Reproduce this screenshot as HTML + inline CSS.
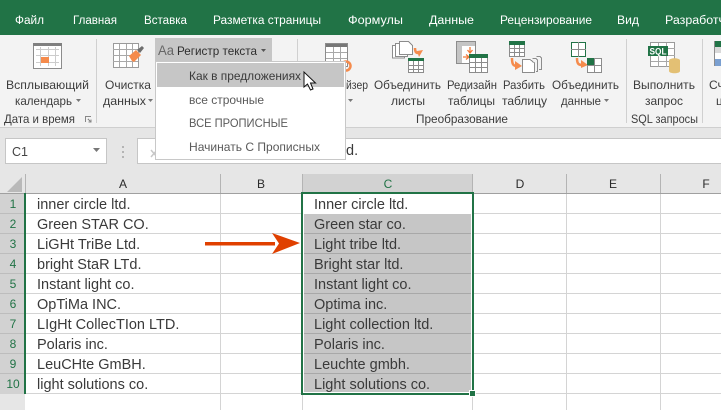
<!DOCTYPE html>
<html><head><meta charset="utf-8"><style>
html,body{margin:0;padding:0;width:721px;height:410px;overflow:hidden;background:#fff}
svg{display:block}
text{font-family:"Liberation Sans",sans-serif}
.t{font-size:11.5px;fill:#fff}
.r{font-size:12px;fill:#3c3c3c}
.m{font-size:12px;fill:#5a5a5a}
.c{font-size:14.5px;fill:#3a3a3a}
.h{font-size:12px;fill:#2a2a2a;text-anchor:middle}
.n{font-size:12px;fill:#217346;text-anchor:middle}
.g{stroke:#8c8c8c;fill:#fff;stroke-width:1;shape-rendering:crispEdges}
.l{stroke:#8c8c8c;fill:none;stroke-width:1;shape-rendering:crispEdges}
</style></head><body>
<svg width="721" height="410" viewBox="0 0 721 410" xmlns="http://www.w3.org/2000/svg">
<!-- tabs -->
<rect width="721" height="35" fill="#217346"/>
<text class="t" x="15" y="24" textLength="29" lengthAdjust="spacingAndGlyphs">Файл</text>
<text class="t" x="73" y="24" textLength="44" lengthAdjust="spacingAndGlyphs">Главная</text>
<text class="t" x="144" y="24" textLength="43" lengthAdjust="spacingAndGlyphs">Вставка</text>
<text class="t" x="213" y="24" textLength="108" lengthAdjust="spacingAndGlyphs">Разметка страницы</text>
<text class="t" x="348" y="24" textLength="55" lengthAdjust="spacingAndGlyphs">Формулы</text>
<text class="t" x="429" y="24" textLength="45" lengthAdjust="spacingAndGlyphs">Данные</text>
<text class="t" x="500" y="24" textLength="92" lengthAdjust="spacingAndGlyphs">Рецензирование</text>
<text class="t" x="617" y="24" textLength="22" lengthAdjust="spacingAndGlyphs">Вид</text>
<text class="t" x="665" y="24" textLength="60" lengthAdjust="spacingAndGlyphs">Разработч</text>

<!-- ribbon -->
<rect y="35" width="721" height="92" fill="#f3f3f3"/>
<rect y="127" width="721" height="1" fill="#cfcfcf"/>
<g fill="#d0d0d0">
<rect x="96" y="39" width="1" height="84"/><rect x="297" y="39" width="1" height="84"/>
<rect x="626" y="39" width="1" height="84"/><rect x="702" y="39" width="1" height="84"/>
</g>

<!-- calendar icon -->
<rect class="g" x="33.500" y="43.500" width="28" height="25"/>
<rect x="33" y="43" width="29" height="3" fill="#808080"/>
<path class="l" style="stroke:#cccccc" d="M36 49.500H59M36 55.500H59M36 62.500H59M40.500 47V66M48.500 47V66M55.500 47V66"/>
<rect x="41" y="57" width="8" height="6" fill="#f58b4c"/>

<!-- clear data icon -->
<rect x="113.500" y="43.500" width="25" height="24" fill="#fff" stroke="#9a9a9a" shape-rendering="crispEdges"/>
<path class="l" style="stroke:#a8a8a8" d="M113 49.500H138M113 55.500H138M113 61.500H138M119.500 44V67M126.500 44V67M132.500 44V67"/>
<path d="M129 56l7-6 5 5-7 7-2-1z" fill="#f58b4c"/>
<path d="M137 50l5-4 2 2-4 5z" fill="#6e6e6e"/>
<text class="r" x="6" y="89" textLength="83" lengthAdjust="spacingAndGlyphs">Всплывающий</text>
<text class="r" x="15" y="105" textLength="57" lengthAdjust="spacingAndGlyphs">календарь</text>
<path d="M76 99h5l-2.500 3z" fill="#777"/>
<text class="r" x="4" y="123" textLength="71" lengthAdjust="spacingAndGlyphs">Дата и время</text>
<path class="l" style="stroke:#888" d="M85.500 122V116.500H91M88 119l3 3M91 119.500V122H88.500"/>
<text class="r" x="105" y="89" textLength="46" lengthAdjust="spacingAndGlyphs">Очистка</text>
<text class="r" x="103" y="105" textLength="43" lengthAdjust="spacingAndGlyphs">данных</text>
<path d="M148 99h5l-2.500 3z" fill="#777"/>

<!-- Регистр текста button -->
<rect x="155" y="38" width="117" height="24" fill="#c6c6c6"/>
<text x="158" y="55" font-size="14" fill="#666" textLength="16" lengthAdjust="spacingAndGlyphs">Aa</text>
<text class="r" x="177" y="55" style="fill:#2e2e2e" textLength="80" lengthAdjust="spacingAndGlyphs">Регистр текста</text>
<path d="M261 49h5l-2.500 3z" fill="#555"/>

<!-- slicer icon -->
<rect x="325.500" y="43.500" width="22" height="23" fill="#fff" stroke="#8c8c8c" shape-rendering="crispEdges"/>
<rect x="326" y="44" width="21" height="3" fill="#777"/>
<path class="l" style="stroke:#a8a8a8" d="M326 52.500H347M326 58.500H347M333.500 47V67M340.500 47V67"/>
<circle cx="346" cy="66" r="4.500" fill="none" stroke="#f58b4c" stroke-width="2.500"/>
<text class="r" x="346" y="89" textLength="22" lengthAdjust="spacingAndGlyphs">йзер</text>
<path d="M348 99h5l-2.500 3z" fill="#777"/>

<!-- merge sheets icon -->
<rect class="g" x="392.500" y="45.500" width="12" height="12.500"/>
<rect class="g" x="395.500" y="43.500" width="12" height="13"/>
<path class="g" d="M399.500 41.500H408.500L412.500 45.500V54.500H399.500Z"/>
<path d="M415 48c0 3 1 5 3 5" fill="none" stroke="#f58b4c" stroke-width="2.500"/>
<path d="M417 51l6-1-4 7z" fill="#f58b4c"/>
<rect x="408.500" y="58.500" width="15" height="14" fill="#fff" stroke="#8c8c8c" shape-rendering="crispEdges"/>
<rect x="408" y="58" width="16" height="3" fill="#217346"/>
<path class="l" d="M408 65.500H424M408 69.500H424M413.500 61V73M418.500 61V73"/>
<text class="r" x="374" y="89" textLength="67" lengthAdjust="spacingAndGlyphs">Объединить</text>
<text class="r" x="391" y="105" textLength="34" lengthAdjust="spacingAndGlyphs">листы</text>

<!-- redesign icon -->
<rect x="456.500" y="41.500" width="19" height="22" fill="#fff" stroke="#8c8c8c" shape-rendering="crispEdges"/>
<rect x="457" y="42" width="18" height="4" fill="#c4c4c4"/>
<rect x="457" y="46" width="5" height="17" fill="#c4c4c4"/>
<path d="M470 47v5M467.500 50l2.500 3 2.500-3M463 57h5M466 54.500l3 2.500-3 2.500" fill="none" stroke="#f27b3a" stroke-width="1.300"/>
<rect x="469.500" y="54.500" width="18" height="18" fill="#fff" stroke="#8c8c8c" shape-rendering="crispEdges"/>
<rect x="469" y="54" width="19" height="4" fill="#217346"/>
<path class="l" d="M469 62.500H488M469 67.500H488M475.500 58V73M481.500 58V73"/>
<text class="r" x="447" y="89" textLength="50" lengthAdjust="spacingAndGlyphs">Редизайн</text>
<text class="r" x="448" y="105" textLength="47" lengthAdjust="spacingAndGlyphs">таблицы</text>

<!-- split icon -->
<rect x="509.500" y="41.500" width="15" height="15" fill="#fff" stroke="#8c8c8c" shape-rendering="crispEdges"/>
<rect x="509" y="41" width="16" height="4" fill="#217346"/>
<path class="l" d="M509 48.500H525M509 52.500H525M514.500 45V57M519.500 45V57"/>
<path d="M512 58c0 6 1 8 5 8" fill="none" stroke="#f58b4c" stroke-width="2.500"/>
<path d="M515 61l7 5-7 4z" fill="#f58b4c"/>
<path class="l" d="M536.500 56.500H540L541.500 58V69.500H539M532.500 58.500H536L537.500 60V71.500H536"/>
<path class="g" d="M522.500 59.500H530L534.500 63V72.500H522.500Z"/>
<text class="r" x="503" y="89" textLength="42" lengthAdjust="spacingAndGlyphs">Разбить</text>
<text class="r" x="502" y="105" textLength="45" lengthAdjust="spacingAndGlyphs">таблицу</text>

<!-- merge data icon -->
<rect x="571.500" y="42.500" width="14" height="14" fill="#fff" stroke="#217346" shape-rendering="crispEdges"/>
<path d="M578.500 42V57M571 49.500H586" stroke="#8c8c8c" fill="none" shape-rendering="crispEdges"/>
<path d="M577 58c0 5 1 7 5 7" fill="none" stroke="#f58b4c" stroke-width="2.500"/>
<path d="M581 60l7 5-7 3z" fill="#f58b4c"/>
<rect x="587.500" y="58.500" width="14" height="14" fill="#fff" stroke="#8c8c8c" shape-rendering="crispEdges"/>
<rect x="587" y="58" width="8" height="8" fill="#217346"/>
<path d="M594.500 58V73M587 65.500H602" stroke="#8c8c8c" fill="none" shape-rendering="crispEdges"/>
<text class="r" x="552" y="89" textLength="67" lengthAdjust="spacingAndGlyphs">Объединить</text>
<text class="r" x="561" y="105" textLength="40" lengthAdjust="spacingAndGlyphs">данные</text>
<path d="M604 99h5l-2.500 3z" fill="#777"/>
<text class="r" x="416" y="123" textLength="92" lengthAdjust="spacingAndGlyphs">Преобразование</text>

<!-- SQL icon -->
<rect x="650.500" y="42.500" width="24" height="24" fill="#fff" stroke="#9a9a9a" shape-rendering="crispEdges"/>
<path class="l" style="stroke:#a8a8a8" d="M651 48.500H675M651 55.500H675M651 61.500H675M658.500 43V67M666.500 43V67"/>
<rect x="648" y="46" width="20" height="10" fill="#217346"/>
<text x="649.500" y="54.500" font-size="9.500" font-weight="bold" fill="#fff" textLength="17" lengthAdjust="spacingAndGlyphs">SQL</text>
<path d="M669 60.500c0-3 11-3 11 0V71c0 3-11 3-11 0z" fill="#e3c074"/>
<text class="r" x="633" y="89" textLength="62" lengthAdjust="spacingAndGlyphs">Выполнить</text>
<text class="r" x="645" y="105" textLength="38" lengthAdjust="spacingAndGlyphs">запрос</text>
<text class="r" x="631" y="123" textLength="67" lengthAdjust="spacingAndGlyphs">SQL запросы</text>

<!-- right clipped icon -->
<rect x="714" y="41" width="7" height="6" fill="#217346"/>
<rect x="714" y="47" width="7" height="6" fill="#d9d9d9"/>
<rect x="714" y="53" width="7" height="6" fill="#fff"/>
<rect x="714" y="59" width="7" height="7" fill="#7a9fd0"/>
<rect x="714" y="41" width="1" height="25" fill="#8c8c8c"/>
<text class="r" x="709" y="89">Сч</text>
<text class="r" x="716" y="105">ц</text>

<!-- formula bar -->
<rect y="128" width="721" height="46" fill="#e6e6e6"/>
<rect x="5.500" y="138.500" width="101" height="25" fill="#fff" stroke="#c6c6c6"/>
<text x="12" y="156" font-size="12.500" fill="#444">C1</text>
<path d="M93 148h7l-3.500 4z" fill="#777"/>
<path d="M122 146h2v2h-2zM122 151h2v2h-2zM122 156h2v2h-2z" fill="#b4b4b4"/>
<rect x="137.500" y="138.500" width="600" height="25" fill="#fff" stroke="#c6c6c6"/>
<path d="M151 150l6 7M157 150l-6 7" stroke="#c8c8c8" stroke-width="1.500"/>
<text x="346" y="155" font-size="14.500" fill="#3a3a3a">d.</text>

<!-- grid -->
<rect y="174" width="721" height="19" fill="#e6e6e6"/>
<rect x="302" y="174" width="171" height="19" fill="#d2d2d2"/>
<rect y="193" width="25" height="201" fill="#d2d2d2"/>
<rect y="394" width="25" height="16" fill="#e6e6e6"/>
<path d="M22 177V192H7Z" fill="#b9b9b9"/>
<rect y="193" width="721" height="1" fill="#a0a0a0"/>
<g fill="#b4b4b4">
<rect x="25" y="174" width="1" height="19"/><rect x="220" y="174" width="1" height="19"/>
<rect x="302" y="174" width="1" height="19"/><rect x="472" y="174" width="1" height="19"/>
<rect x="566" y="174" width="1" height="19"/><rect x="660" y="174" width="1" height="19"/>
</g>
<g fill="#d4d4d4">
<rect x="25" y="213" width="696" height="1"/><rect x="25" y="233" width="696" height="1"/>
<rect x="25" y="253" width="696" height="1"/><rect x="25" y="273" width="696" height="1"/>
<rect x="25" y="293" width="696" height="1"/><rect x="25" y="313" width="696" height="1"/>
<rect x="25" y="333" width="696" height="1"/><rect x="25" y="353" width="696" height="1"/>
<rect x="25" y="373" width="696" height="1"/><rect x="25" y="393" width="696" height="1"/>
<rect x="220" y="194" width="1" height="216"/><rect x="302" y="194" width="1" height="216"/>
<rect x="472" y="194" width="1" height="216"/><rect x="566" y="194" width="1" height="216"/>
<rect x="660" y="194" width="1" height="216"/>
</g>
<g fill="#bdbdbd">
<rect y="213" width="24" height="1"/><rect y="233" width="24" height="1"/><rect y="253" width="24" height="1"/>
<rect y="273" width="24" height="1"/><rect y="293" width="24" height="1"/><rect y="313" width="24" height="1"/>
<rect y="333" width="24" height="1"/><rect y="353" width="24" height="1"/><rect y="373" width="24" height="1"/>
</g>
<rect x="24" y="193" width="2" height="201" fill="#217346"/>

<text class="h" x="123" y="188">A</text>
<text class="h" x="261" y="188">B</text>
<text class="n" x="388" y="188">C</text>
<text class="h" x="520" y="188">D</text>
<text class="h" x="613" y="188">E</text>
<text class="h" x="706" y="188">F</text>

<text class="n" x="13" y="208">1</text><text class="n" x="13" y="228">2</text><text class="n" x="13" y="248">3</text>
<text class="n" x="13" y="268">4</text><text class="n" x="13" y="288">5</text><text class="n" x="13" y="308">6</text>
<text class="n" x="13" y="328">7</text><text class="n" x="13" y="348">8</text><text class="n" x="13" y="368">9</text>
<text class="n" x="13" y="388">10</text>

<text class="c" x="37" y="209">inner circle ltd.</text>
<text class="c" x="37" y="229">Green STAR CO.</text>
<text class="c" x="37" y="249">LiGHt TriBe Ltd.</text>
<text class="c" x="37" y="269">bright StaR LTd.</text>
<text class="c" x="37" y="289">Instant light co.</text>
<text class="c" x="37" y="309">OpTiMa INC.</text>
<text class="c" x="37" y="329">LIgHt CollecTIon LTD.</text>
<text class="c" x="37" y="349">Polaris inc.</text>
<text class="c" x="37" y="369">LeuCHte GmBH.</text>
<text class="c" x="37" y="389">light solutions co.</text>

<!-- selection -->
<rect x="303" y="194" width="169" height="199" fill="#fff"/>
<rect x="304" y="214" width="167" height="178" fill="#c6c6c6"/>
<g fill="#a8a8a8">
<rect x="304" y="233" width="167" height="1"/><rect x="304" y="253" width="167" height="1"/>
<rect x="304" y="273" width="167" height="1"/><rect x="304" y="293" width="167" height="1"/>
<rect x="304" y="313" width="167" height="1"/><rect x="304" y="333" width="167" height="1"/>
<rect x="304" y="353" width="167" height="1"/><rect x="304" y="373" width="167" height="1"/>
</g>
<text class="c" x="314" y="209">Inner circle ltd.</text>
<text class="c" x="314" y="229">Green star co.</text>
<text class="c" x="314" y="249">Light tribe ltd.</text>
<text class="c" x="314" y="269">Bright star ltd.</text>
<text class="c" x="314" y="289">Instant light co.</text>
<text class="c" x="314" y="309">Optima inc.</text>
<text class="c" x="314" y="329">Light collection ltd.</text>
<text class="c" x="314" y="349">Polaris inc.</text>
<text class="c" x="314" y="369">Leuchte gmbh.</text>
<text class="c" x="314" y="389">Light solutions co.</text>
<rect x="302" y="193" width="171" height="201" fill="none" stroke="#217346" stroke-width="2" shape-rendering="crispEdges"/>
<rect x="469.500" y="390.500" width="6" height="6" fill="#217346" stroke="#fff" shape-rendering="crispEdges"/>

<!-- arrow -->
<rect x="205" y="242" width="70" height="3.500" fill="#e04000"/>
<path d="M272 233L300 243L272 254L279 243.500Z" fill="#e04000"/>

<!-- dropdown -->
<rect x="155.500" y="61.500" width="190" height="98" fill="#fff" stroke="#c8c8c8"/>
<rect x="157" y="63" width="187" height="24" fill="#c6c6c6"/>
<text class="m" x="189" y="80" style="fill:#3a3a3a" textLength="112" lengthAdjust="spacingAndGlyphs">Как в предложениях</text>
<text class="m" x="189" y="104" textLength="75" lengthAdjust="spacingAndGlyphs">все строчные</text>
<text class="m" x="189" y="127" textLength="99" lengthAdjust="spacingAndGlyphs">ВСЕ ПРОПИСНЫЕ</text>
<text class="m" x="189" y="151" textLength="131" lengthAdjust="spacingAndGlyphs">Начинать С Прописных</text>

<!-- cursor -->
<path d="M304 72V87L307.500 84L310.500 90L313 89L310.500 83L315.500 83Z" fill="#fff" stroke="#111" stroke-width="1"/>
</svg>
</body></html>
